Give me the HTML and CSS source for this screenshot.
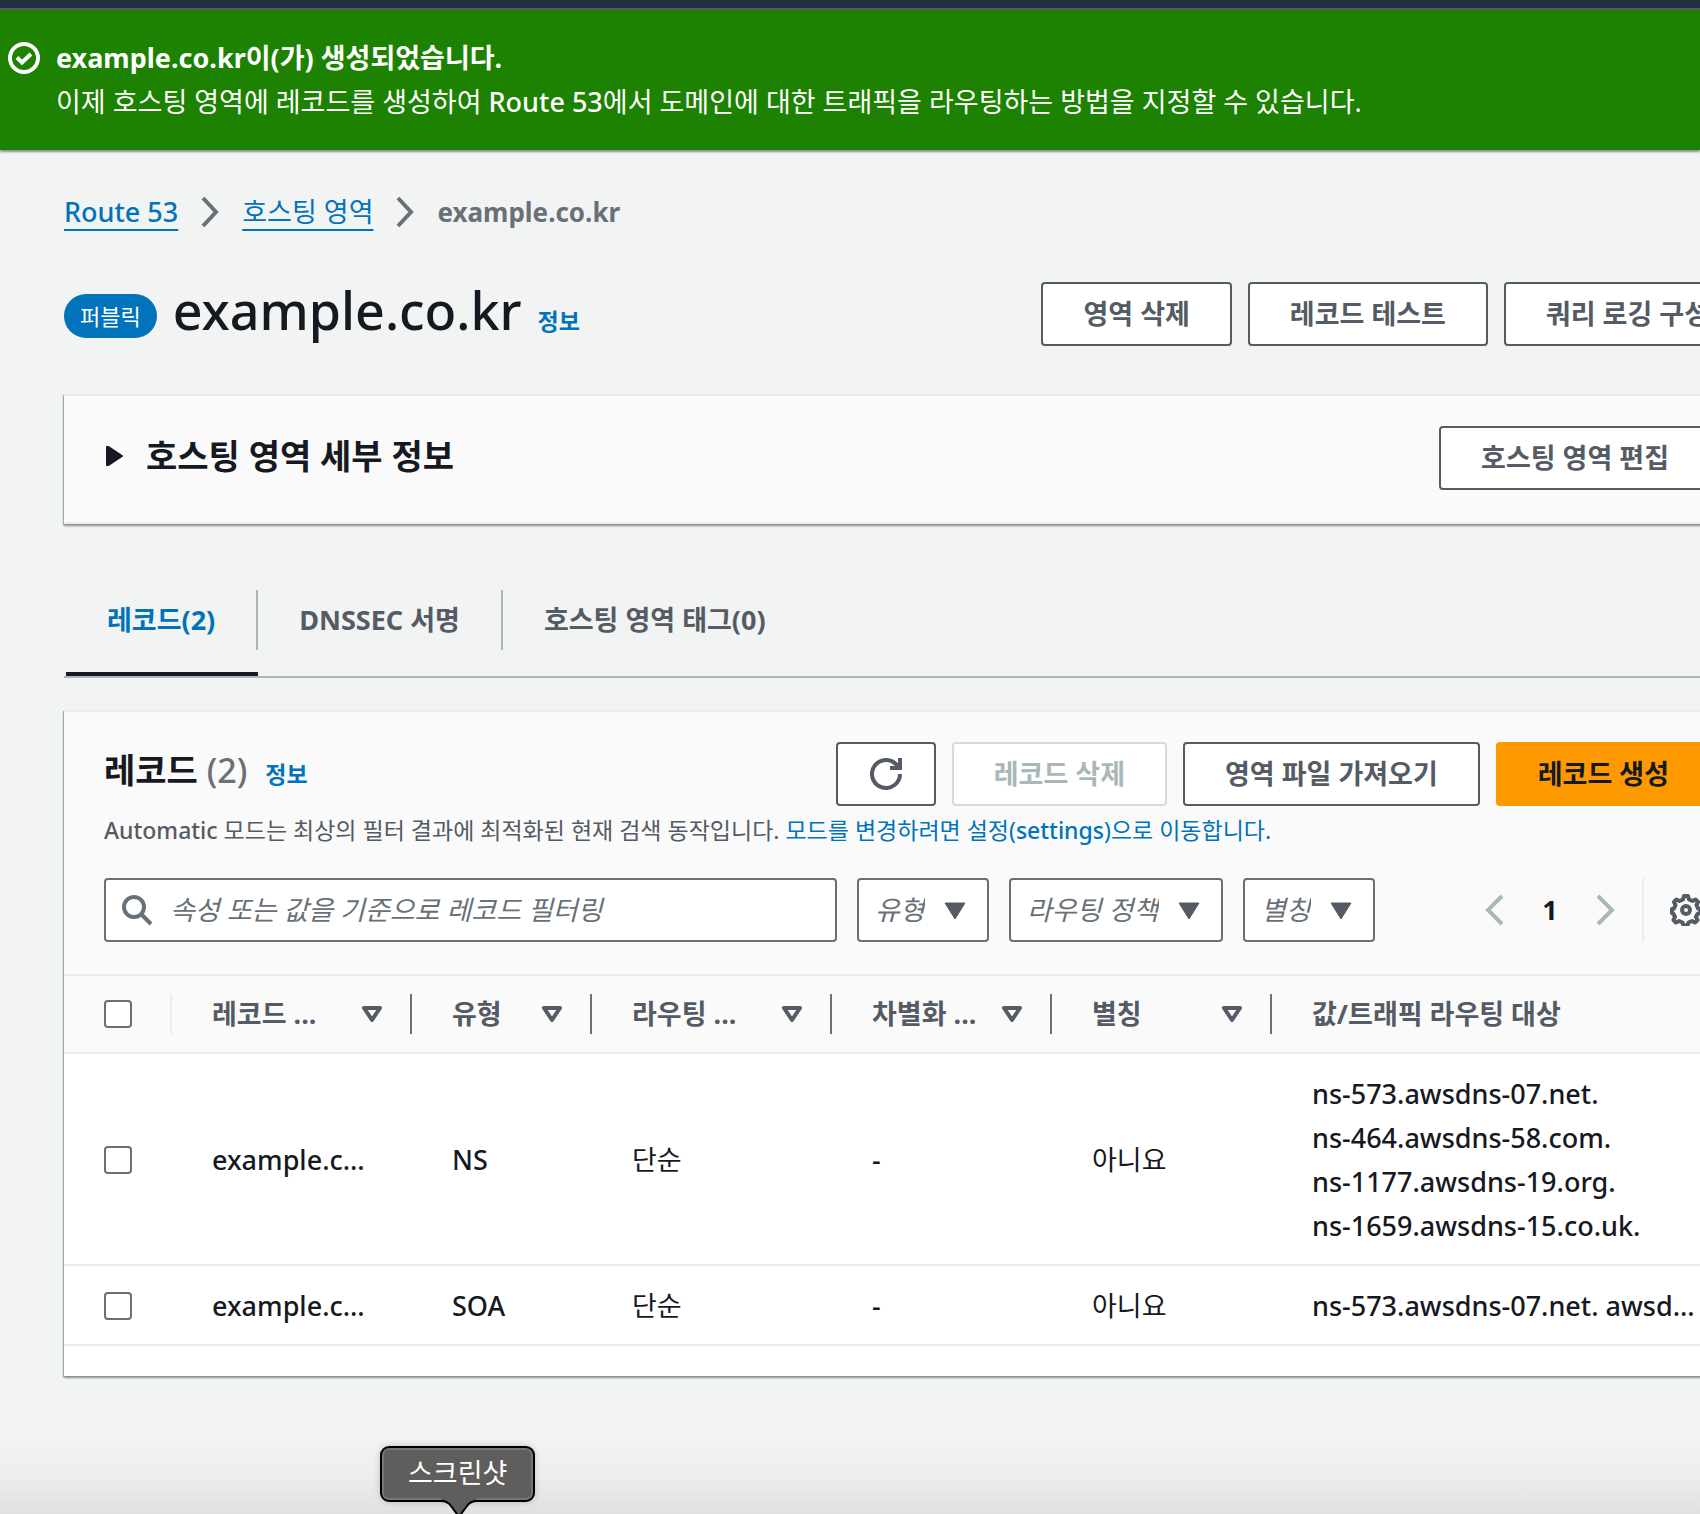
FILE: index.html
```html
<!DOCTYPE html>
<html lang="ko">
<head>
<meta charset="utf-8">
<meta name="viewport" content="width=device-width, initial-scale=1">
<title>example.co.kr - Route 53</title>
<link rel="stylesheet" href="styles.css">
</head>
<body>
<div class="topbar"></div>

<section class="banner" role="status">
  <svg class="banner-icon" width="32" height="32" viewBox="0 0 32 32" fill="none" stroke="currentColor" stroke-width="4" aria-hidden="true">
    <circle cx="16" cy="16" r="14"/>
    <path d="M9 15.500l5 5L23 12"/>
  </svg>
  <div>
    <strong class="banner-title">example.co.kr이(가) 생성되었습니다.</strong>
    <p class="banner-text">이제 호스팅 영역에 레코드를 생성하여 <span class="latin">Route 53</span>에서 도메인에 대한 트래픽을 라우팅하는 방법을 지정할 수 있습니다.</p>
  </div>
</section>

<main class="content">
  <nav class="breadcrumb" aria-label="이동 경로">
    <a class="latin" href="#">Route 53</a>
    <svg width="18" height="32" viewBox="0 0 18 32" fill="none" stroke="currentColor" stroke-width="4" aria-hidden="true"><path d="M2 2l13 14-13 14"/></svg>
    <a href="#">호스팅 영역</a>
    <svg width="18" height="32" viewBox="0 0 18 32" fill="none" stroke="currentColor" stroke-width="4" aria-hidden="true"><path d="M2 2l13 14-13 14"/></svg>
    <span class="current" aria-current="page">example.co.kr</span>
  </nav>

  <header class="page-header">
    <div class="page-title">
      <span class="badge">퍼블릭</span>
      <h1>example.co.kr</h1>
      <a class="info" href="#">정보</a>
    </div>
    <div class="actions">
      <button class="btn" type="button">영역 삭제</button>
      <button class="btn" type="button">레코드 테스트</button>
      <button class="btn" type="button">쿼리 로깅 구성</button>
    </div>
  </header>

  <section class="card details">
    <h2 class="details-title">
      <svg width="18" height="20" viewBox="0 0 18 20" fill="currentColor" stroke="currentColor" stroke-width="2" stroke-linejoin="round" aria-hidden="true"><path d="M1 1h1.500L16 10 2.500 19H1z"/></svg>
      호스팅 영역 세부 정보
    </h2>
    <button class="btn" type="button">호스팅 영역 편집</button>
  </section>

  <div class="tabs" role="tablist">
    <button class="tab active" type="button" role="tab" aria-selected="true"><span>레코드(2)</span></button>
    <button class="tab" type="button" role="tab" aria-selected="false"><span>DNSSEC 서명</span></button>
    <button class="tab" type="button" role="tab" aria-selected="false"><span>호스팅 영역 태그(0)</span></button>
  </div>

  <section class="card records">
    <div class="records-header">
      <div class="records-top">
        <div class="records-title">
          <h2>레코드 <span class="count">(2)</span></h2>
          <a class="info" href="#">정보</a>
        </div>
        <div class="actions">
          <button class="btn btn-icon" type="button" aria-label="새로 고침">
            <svg width="32" height="32" viewBox="0 0 32 32" fill="none" stroke="currentColor" stroke-width="4" aria-hidden="true"><path d="M30 16A14 14 0 1 1 25.500 5.700L30 10M30 0v10H20"/></svg>
          </button>
          <button class="btn" type="button" disabled>레코드 삭제</button>
          <button class="btn" type="button">영역 파일 가져오기</button>
          <button class="btn btn-primary" type="button">레코드 생성</button>
        </div>
      </div>
      <p class="description"><span class="latin">Automatic</span> 모드는 최상의 필터 결과에 최적화된 현재 검색 동작입니다. <a href="#">모드를 변경하려면 설정(<span class="latin">settings</span>)으로 이동합니다.</a></p>
      <div class="filters">
        <label class="search">
          <svg width="32" height="32" viewBox="0 0 32 32" fill="none" stroke="currentColor" stroke-width="4" aria-hidden="true"><circle cx="12" cy="13" r="10"/><path d="M19 20l10 10"/></svg>
          <input type="text" aria-label="레코드 필터링" placeholder="속성 또는 값을 기준으로 레코드 필터링">
        </label>
        <span class="select"><select aria-label="유형"><option>유형</option></select><svg width="22" height="18" viewBox="0 0 22 18" fill="currentColor" aria-hidden="true"><path d="M1 1h20l-10 16z" stroke="currentColor" stroke-linejoin="round"/></svg></span>
        <span class="select"><select aria-label="라우팅 정책"><option>라우팅 정책</option></select><svg width="22" height="18" viewBox="0 0 22 18" fill="currentColor" aria-hidden="true"><path d="M1 1h20l-10 16z" stroke="currentColor" stroke-linejoin="round"/></svg></span>
        <span class="select"><select aria-label="별칭"><option>별칭</option></select><svg width="22" height="18" viewBox="0 0 22 18" fill="currentColor" aria-hidden="true"><path d="M1 1h20l-10 16z" stroke="currentColor" stroke-linejoin="round"/></svg></span>
        <div class="pager">
          <button class="pager-btn" type="button" aria-label="이전 페이지"><svg width="20" height="32" viewBox="0 0 20 32" fill="none" stroke="currentColor" stroke-width="4" aria-hidden="true"><path d="M18 2L4 16l14 14"/></svg></button>
          <button class="pager-btn page" type="button">1</button>
          <button class="pager-btn" type="button" aria-label="다음 페이지"><svg width="20" height="32" viewBox="0 0 20 32" fill="none" stroke="currentColor" stroke-width="4" aria-hidden="true"><path d="M2 2l14 14L2 30"/></svg></button>
          <button class="pager-btn settings" type="button" aria-label="설정"><svg width="32" height="32" viewBox="0 0 32 32" fill="none" stroke="currentColor" stroke-width="4" stroke-linejoin="round" aria-hidden="true"><path d="M14 2h4l1 3.500 3.500 1.500 3-1.500 2.500 2.500-1.500 3 1.500 3.500 2.500.500v4l-3 1-1.500 3 1.500 3-2.500 2.500-3-1.500-3.500 1.500-1 3h-4l-1-3-3.500-1.500-3 1.500L3.500 26 5 23l-1.500-3L2 19v-4l2-.500L5.500 11 4 8l2.500-2.500 3 1.500L13 5.500z"/><circle cx="16" cy="16" r="4"/></svg></button>
        </div>
      </div>
    </div>

    <table class="table">
      <colgroup><col class="c-check"><col class="c-wide"><col class="c-type"><col class="c-wide"><col class="c-mid"><col class="c-mid"><col></colgroup>
      <thead>
        <tr>
          <th class="check"><div class="th light"><input type="checkbox" aria-label="모두 선택"></div></th>
          <th><div class="th">레코드 ...<svg width="22" height="18" viewBox="0 0 22 18" fill="none" stroke="currentColor" stroke-width="4" stroke-linejoin="round" aria-hidden="true"><path d="M3 3h16l-8 12z"/></svg></div></th>
          <th><div class="th">유형<svg width="22" height="18" viewBox="0 0 22 18" fill="none" stroke="currentColor" stroke-width="4" stroke-linejoin="round" aria-hidden="true"><path d="M3 3h16l-8 12z"/></svg></div></th>
          <th><div class="th">라우팅 ...<svg width="22" height="18" viewBox="0 0 22 18" fill="none" stroke="currentColor" stroke-width="4" stroke-linejoin="round" aria-hidden="true"><path d="M3 3h16l-8 12z"/></svg></div></th>
          <th><div class="th">차별화 ...<svg width="22" height="18" viewBox="0 0 22 18" fill="none" stroke="currentColor" stroke-width="4" stroke-linejoin="round" aria-hidden="true"><path d="M3 3h16l-8 12z"/></svg></div></th>
          <th><div class="th">별칭<svg width="22" height="18" viewBox="0 0 22 18" fill="none" stroke="currentColor" stroke-width="4" stroke-linejoin="round" aria-hidden="true"><path d="M3 3h16l-8 12z"/></svg></div></th>
          <th><div class="th last">값/트래픽 라우팅 대상</div></th>
        </tr>
      </thead>
      <tbody>
        <tr>
          <td class="check"><input type="checkbox" aria-label="NS 레코드 선택"></td>
          <td class="latin">example.c…</td><td class="latin">NS</td><td>단순</td><td class="latin">-</td><td>아니요</td>
          <td class="latin">ns-573.awsdns-07.net.<br>ns-464.awsdns-58.com.<br>ns-1177.awsdns-19.org.<br>ns-1659.awsdns-15.co.uk.</td>
        </tr>
        <tr>
          <td class="check"><input type="checkbox" aria-label="SOA 레코드 선택"></td>
          <td class="latin">example.c…</td><td class="latin">SOA</td><td>단순</td><td class="latin">-</td><td>아니요</td>
          <td class="latin">ns-573.awsdns-07.net. awsd…</td>
        </tr>
      </tbody>
    </table>
  </section>
</main>

<footer class="dock">
  <div class="tooltip" role="tooltip">스크린샷
    <svg class="tail" width="36" height="20" viewBox="0 0 36 20" aria-hidden="true"><path d="M0 0h36v2c-6 0-8 3-10 6l-8 12-8-12C8 5 6 2 0 2z" fill="#5f5e5c"/><path d="M0 3c6 0 8 2 10 5l9 12M36 3c-6 0-8 2-10 5l-9 12" fill="none" stroke="#000" stroke-width="2"/></svg>
  </div>
</footer>
</body>
</html>
```
FILE: styles.css
```css
:root {
  --text: #16191f;
  --muted: #545b64;
  --icon: #687078;
  --link: #0073bb;
  --line: #eaeded;
  --disabled: #aab7b8;
}

* {
  box-sizing: border-box;
}

body {
  margin: 0;
  min-height: 100vh;
  display: flex;
  flex-direction: column;
  overflow: hidden;
  background: #f2f3f3;
  color: var(--text);
  font: 27px/44px "Noto Sans", "Noto Sans CJK KR", sans-serif;
}

h1, h2, p {
  margin: 0;
}

a {
  color: var(--link);
  text-decoration: none;
}

button, input, select {
  font: inherit;
  color: inherit;
}

svg {
  flex: none;
  display: block;
}

.latin {
  font-weight: 500;
}

.topbar {
  height: 10px;
  background: #232f3e;
  border-bottom: 2px solid #545b64;
}

.banner {
  display: flex;
  gap: 16px;
  padding: 26px 8px;
  background: #1d8102;
  color: #fff;
  box-shadow: 0 2px 2px #879196;
}

.banner-icon {
  margin-top: 6px;
}

.banner-title {
  display: block;
}

/* The page body is wider than the window and runs off its right side. */
.content {
  flex: 1;
  margin-right: -51px;
  padding: 40px 0 0 64px;
}

.breadcrumb {
  display: flex;
  align-items: center;
  gap: 23px;
  color: var(--icon);
}

.breadcrumb a {
  text-decoration: underline 2px;
  text-underline-offset: 7px;
  text-decoration-skip-ink: none;
}

.current {
  font-size: 26px;
  font-weight: 700;
}

.page-header {
  display: flex;
  justify-content: space-between;
  margin: 48px 0;
}

.page-title {
  display: flex;
  align-items: baseline;
  gap: 16px;
}

.page-title h1 {
  font-size: 52px;
  line-height: 56px;
  font-weight: 500;
}

.badge {
  align-self: flex-start;
  margin-top: 12px;
  padding: 0 16px;
  border-radius: 22px;
  background: var(--link);
  color: #fff;
  font-size: 22px;
}

.info {
  font-size: 23px;
  line-height: 40px;
  font-weight: 700;
}

.actions {
  display: flex;
  gap: 16px;
}

.btn {
  height: 64px;
  padding: 0 40px;
  border: 2px solid var(--muted);
  border-radius: 4px;
  background: #fff;
  color: var(--muted);
  font-weight: 700;
  white-space: nowrap;
}

.btn:disabled {
  border-color: #d5dbdb;
  color: var(--disabled);
}

.btn-icon {
  padding: 0 32px;
}

.btn-primary {
  border-color: #f90;
  background: #f90;
  color: var(--text);
}

.card {
  background: #fafafa;
  border-top: 2px solid var(--line);
  box-shadow: 0 2px 2px #879196, -1px 1px 1px #aab7b8;
}

.details {
  display: flex;
  align-items: flex-start;
  justify-content: space-between;
  padding: 30px 40px 32px;
  border-bottom: 2px solid var(--line);
}

.details-title {
  display: flex;
  align-items: center;
  gap: 22px;
  padding-left: 2px;
  font-size: 34px;
  line-height: 60px;
}

.tabs {
  display: flex;
  margin: 66px 0 32px;
  padding-left: 2px;
  border-bottom: 2px solid var(--disabled);
}

.tab {
  padding: 0 0 22px;
  border: 0;
  border-bottom: 4px solid transparent;
  background: none;
  color: var(--muted);
  font-weight: 700;
}

.tab span {
  display: block;
  padding: 0 41px;
  border-right: 2px solid var(--disabled);
  line-height: 60px;
}

.tab:last-child span {
  border-right: 0;
}

.tab.active {
  border-bottom-color: var(--text);
  color: var(--link);
}

.records {
  padding-bottom: 30px;
  background: #fff;
}

.records-header {
  padding: 30px 40px 32px;
  background: #fafafa;
}

.records-top {
  display: flex;
  justify-content: space-between;
}

.records-title {
  display: flex;
  align-items: baseline;
  gap: 18px;
}

.records-title h2 {
  font-size: 34px;
  line-height: 56px;
}

.count {
  color: var(--icon);
  font-weight: 500;
}

.description {
  margin: 2px 0 26px;
  color: var(--muted);
  font-size: 23px;
}

.filters {
  display: flex;
  gap: 20px;
}

.search {
  flex: 0 1 733px;
  display: flex;
  align-items: center;
  gap: 16px;
  height: 64px;
  padding: 0 16px;
  border: 2px solid var(--icon);
  border-radius: 4px;
  background: #fff;
  color: var(--icon);
}

.search input {
  flex: 1;
  min-width: 0;
  padding: 0;
  border: 0;
  outline: 0;
  background: none;
}

.search input::placeholder {
  color: var(--icon);
  font-style: italic;
  opacity: 1;
}

.select {
  position: relative;
  color: var(--muted);
}

.select select {
  appearance: none;
  height: 64px;
  padding: 0 62px 0 16px;
  border: 2px solid var(--icon);
  border-radius: 4px;
  background: #fff;
  color: var(--icon);
  font-style: italic;
}

.select svg {
  position: absolute;
  top: 24px;
  right: 23px;
  pointer-events: none;
}

.pager {
  display: flex;
  margin-left: auto;
}

.pager-btn {
  display: grid;
  place-items: center;
  width: 56px;
  height: 64px;
  padding: 0;
  border: 0;
  background: none;
  color: var(--disabled);
}

.pager-btn.page {
  color: var(--text);
  font-weight: 700;
}

.pager-btn.settings {
  justify-items: start;
  width: 69px;
  margin-left: 8px;
  padding-left: 26px;
  border-left: 2px solid var(--line);
  color: var(--muted);
}

.table {
  width: 100%;
  table-layout: fixed;
  border-collapse: separate;
  border-spacing: 0;
}

.c-check { width: 108px; }
.c-wide { width: 240px; }
.c-type { width: 180px; }
.c-mid { width: 220px; }

.table th {
  padding: 18px 0;
  border: solid var(--line);
  border-width: 2px 0;
  background: #fafafa;
  color: var(--muted);
  text-align: left;
}

.th {
  display: flex;
  align-items: center;
  justify-content: space-between;
  height: 40px;
  padding: 0 27px 0 40px;
  border-right: 2px solid var(--icon);
  white-space: nowrap;
}

.th.light {
  border-right-color: var(--line);
}

.th.last {
  border-right: 0;
}

.table td {
  padding: 18px 0 16px 40px;
  border-bottom: 2px solid var(--line);
  white-space: nowrap;
}

.table input {
  appearance: none;
  display: block;
  flex: none;
  width: 28px;
  height: 28px;
  margin: 0;
  border: 2px solid var(--icon);
  border-radius: 4px;
  background: #fff;
}

.dock {
  position: relative;
  height: 80px;
  background: linear-gradient(#f2f3f3, #edeeee 50%, #dfe0e0);
}

.tooltip {
  position: absolute;
  left: 380px;
  bottom: 12px;
  padding: 3px 26px 5px;
  border: 2px solid #000;
  border-radius: 9px;
  background: #5f5e5c;
  box-shadow: inset 0 0 0 2px #777674, 0 0 6px #0003;
  color: #fff;
}

.tail {
  position: absolute;
  top: 50px;
  left: 59px;
}
```
